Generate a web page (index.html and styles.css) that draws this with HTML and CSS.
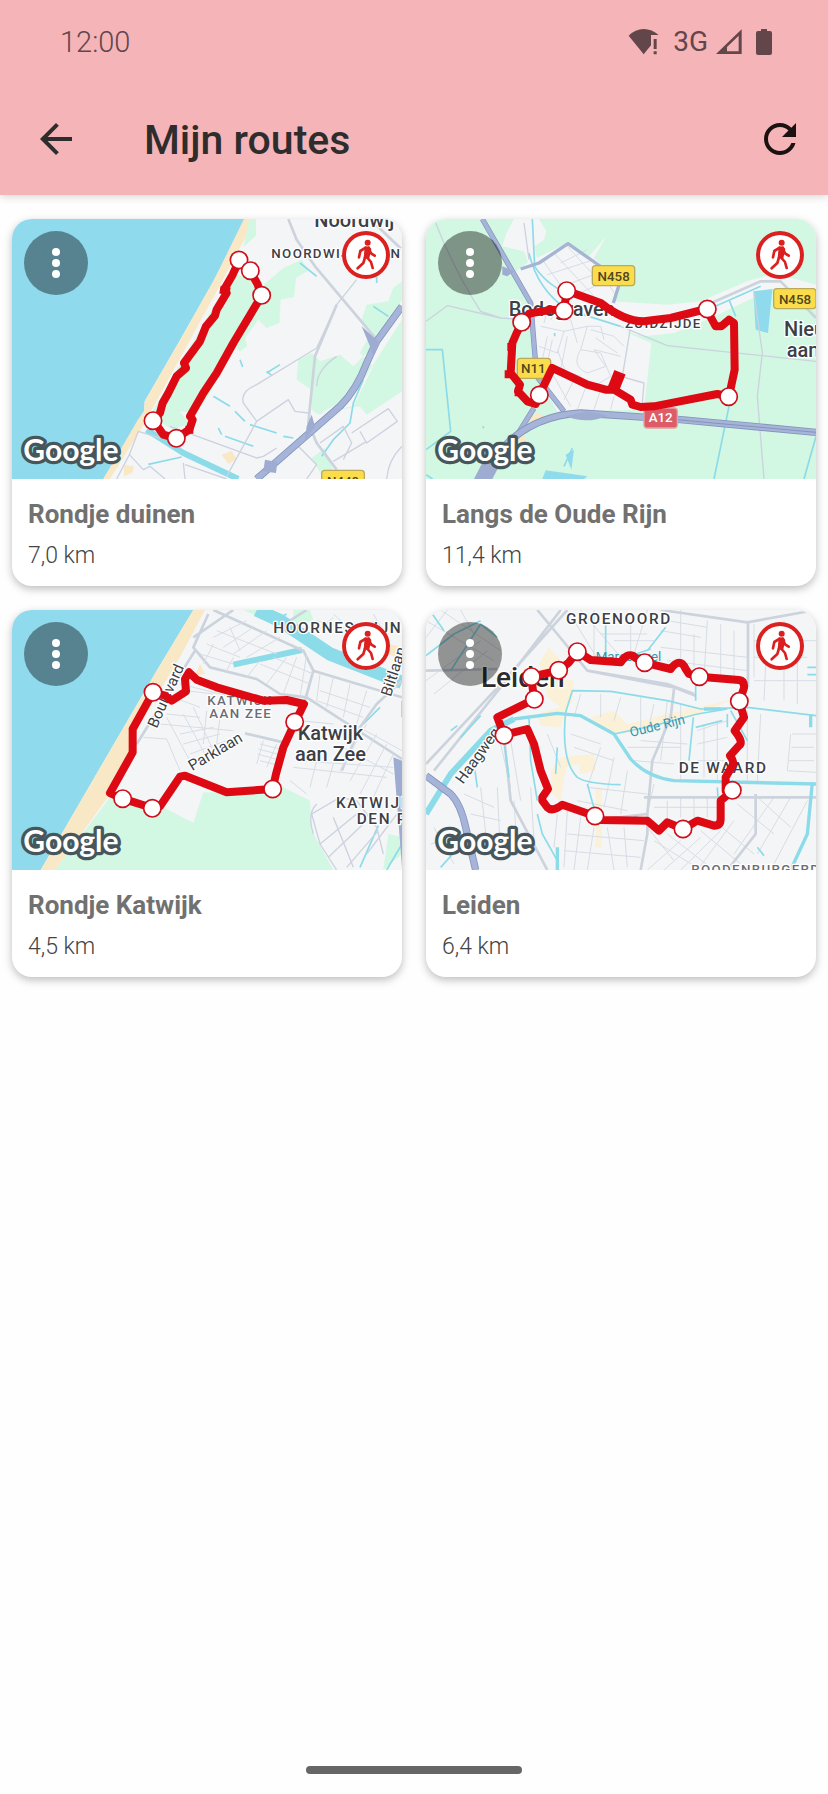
FILE: index.html
```html
<!DOCTYPE html>
<html lang="nl">
<head>
  <title>Mijn routes</title>
  <meta charset="UTF-8">
  <meta name="viewport" content="width=device-width, initial-scale=1.0">
  <link rel="stylesheet" href="styles.css">
</head>
<body>
  <!-- Shared icons -->
  <svg class="sprite" width="0" height="0" aria-hidden="true">
    <symbol id="icon-walk" viewBox="0 0 144 144">
      <circle cx="77" cy="35" r="9"/>
      <path d="M67 47 L82 46 L88 54 L82 82 L65 82 L67 58Z"/>
      <path class="limb" d="M71 50 L55 60 L51 79 M80 51 L87 67 L98 74 M70 76 L64 96 L47 112 M74 78 L87 93 L92 111"/>
    </symbol>
    <symbol id="icon-more" viewBox="0 0 64 64">
      <circle cx="32" cy="21" r="4"/>
      <circle cx="32" cy="32" r="4"/>
      <circle cx="32" cy="43" r="4"/>
    </symbol>
  </svg>

  <header class="top">
    <div class="status-bar">
      <span class="clock">12:00</span>
      <div class="status-icons">
        <svg width="31" height="27" viewBox="640 84 93 81" aria-hidden="true">
          <path d="M642 107 Q662 87 687 87 Q712 87 732 105 L709 105 L709 136 L687 163Z"/>
          <path d="M717 117h9v30h-9zM717 154h9v9h-9z"/>
        </svg>
        <span class="network">3G</span>
        <svg width="26" height="26" viewBox="907 88 78 78" aria-hidden="true">
          <path fill-rule="evenodd" d="M907 163 L984 89 L984 163Z M940 155 L975 155 L975 108 L940 142Z"/>
        </svg>
        <svg class="battery" width="16" height="26" viewBox="0 0 16 26" aria-hidden="true">
          <path d="M5 0h6v2h3a2 2 0 0 1 2 2v20a2 2 0 0 1-2 2H2a2 2 0 0 1-2-2V4a2 2 0 0 1 2-2h3z"/>
        </svg>
      </div>
    </div>
    <div class="app-bar">
      <button class="icon-btn" aria-label="Terug">
        <svg viewBox="0 0 24 24"><path d="M20 11H7.83l5.59-5.59L12 4l-8 8 8 8 1.41-1.41L7.83 13H20v-2z"/></svg>
      </button>
      <h1>Mijn routes</h1>
      <button class="icon-btn refresh" aria-label="Vernieuwen">
        <svg viewBox="0 0 24 24"><path d="M17.65 6.35C16.2 4.9 14.21 4 12 4c-4.42 0-7.99 3.58-7.99 8s3.57 8 7.99 8c3.73 0 6.84-2.55 7.73-6h-2.08c-.82 2.33-3.04 4-5.65 4-3.31 0-6-2.69-6-6s2.69-6 6-6c1.66 0 3.14.69 4.22 1.78L13 11h7V4l-2.35 2.35z"/></svg>
      </button>
    </div>
  </header>

  <main class="routes">
    <article class="card">
      <div class="map">
        <svg class="map-image" viewBox="36 28 1170 780" preserveAspectRatio="xMidYMid slice">
          <rect class="land" x="36" y="28" width="1170" height="780"/>
          <path class="sea" d="M36 28H738L640 215 535 400 434 575 432 605 310 808H36Z"/>
          <path class="sand" d="M732 28H766L650 245 450 610 425 655 330 808H310L415 628 432 605 434 575 535 400 640 215Z"/>
          <path class="park" d="M748 28h20v50l-38 34zM700 190L745 205 780 235 850 175 905 150 925 182 888 205 882 262 842 270 838 340 800 355 775 330 735 385 742 410 720 425 700 410 625 560 590 610 538 605 570 640 520 660 450 620 560 430Z"/>
          <path class="park" d="M1206 215L1180 235 1165 275 1100 285 1085 330 1110 375 1080 430 1120 470 1060 590 1000 600 955 615 935 600 935 540 890 510 895 450 935 430 960 455 1020 435 1060 470 1110 420 1206 270ZM1206 330L1110 480 1060 560 960 610 1080 590 1100 615 1206 545Z"/>
          <path class="park" d="M935 745l40-30 25 70-30 20z"/>
          <path class="sand" d="M665 735l30-12 15 25-25 15zM372 765l30 5-5 20-25 10z"/>
          <path class="water wide" d="M440 660L550 730 715 808"/>
          <path class="water" d="M445 764L545 742M640 560L690 590M705 605L735 635M750 645L830 670M850 680L880 685M655 655L665 675M675 680L760 710M800 490l40-25M720 450l8 22M965 740L1000 690 1050 640 1060 580 1090 510M800 485l15 12M900 160L950 200M1120 290L1165 320M1130 160v60"/>
          <path class="street" d="M415 665L480 685M415 665L388 735 430 780 450 770 495 808M388 735L350 808M550 760L555 808M555 765L680 808M510 650L770 745 790 740 830 715M680 800L770 635 730 580 Q720 545 770 525L950 415 1010 285 1070 210M770 635L865 570 885 605 925 610M885 700L950 765 920 808M960 700L1030 650 1055 700 1030 750M1055 670L1165 597 1192 635 1100 700 1080 665M1000 755L1100 695M1160 808Q1165 750 1206 710M1010 440Q950 480 950 530"/>
          <path class="road" d="M865 28L890 90 945 170 1130 390M1010 285L945 440 925 640 950 700 1010 780M1110 28L1206 120"/>
          <path class="motorway-edge" d="M770 808L1020 590Q1070 540 1100 460L1130 395 1206 290"/>
          <path class="motorway" d="M770 808L1020 590Q1070 540 1100 460L1130 395 1206 290"/>
          <path class="junction" d="M1085 350L1140 400 1120 440 1108 405ZM935 615L945 650 915 690 920 650ZM795 750L832 757 828 790 790 785Z"/>
          <g class="shield"><rect x="965" y="782" width="128" height="60" rx="10"/><text x="1029" y="829">N449</text></g>
          <text class="town" x="943" y="52">Noordwij</text>
          <text class="district small" x="814" y="144">NOORDWIJK-BINNEN</text>
          <path class="route" d="M716 155L698 195 672 240 680 250 650 300 645 318 618 350 600 395 552 460 558 475 530 500 505 550 488 580 480 610 460 633 490 675 528 686 568 660 578 630 570 620 610 550 650 490 700 400 785 258 772 222 750 183Z"/>
          <path class="route-spur" d="M660 240l30 5M568 648v24"/>
          <g class="stops">
            <circle cx="717" cy="151" r="26"/><circle cx="751" cy="183" r="26"/><circle cx="785" cy="257" r="26"/>
            <circle cx="459" cy="633" r="26"/><circle cx="529" cy="686" r="26"/>
          </g>
          <text class="google" x="70" y="754">Google</text>
        </svg>
        <button class="menu-btn" aria-label="Meer opties"><svg><use href="#icon-more"/></svg></button>
        <span class="badge" role="img" aria-label="Wandelroute"><svg><use href="#icon-walk"/></svg></span>
      </div>
      <div class="card-body">
        <h2>Rondje duinen</h2>
        <p>7,0 km</p>
      </div>
    </article>

    <article class="card">
      <div class="map">
        <svg class="map-image" viewBox="36 28 1170 780" preserveAspectRatio="xMidYMid slice">
          <rect class="green" x="36" y="28" width="1170" height="780"/>
          <path class="land" d="M300 28H375L398 65 390 90 362 110 368 145 460 100 525 140 578 78 540 145 620 215 600 275 760 285 860 275 1000 215 1080 190 1206 225 1206 300 1080 235 880 330 780 370 690 380 630 365 712 400 690 600 430 605 360 480 350 290 300 190 342 158 330 125 265 110 275 75Z"/>
          <path class="sand" d="M352 610L415 620 340 665ZM300 690l30-20 5 30z"/>
          <path class="lake" d="M1018 245L1075 238 1062 370 1025 360ZM395 782L520 800 510 808H385ZM455 735l25-15-8 60zM428 725l6 18z"/>
          <path class="water" d="M355 28L362 170Q400 230 480 260M345 130Q370 240 460 300L620 350M900 808L945 590M1170 808L1206 680M36 420H85L110 665 36 720M870 305L1040 230M945 270L965 320M475 715L450 770M422 370v10M36 795l20 13M208 650v6"/>
          <path class="street" d="M65 40Q120 180 200 305L260 325 330 330M36 335L100 288 260 325M620 350L760 408 1206 455M1020 250L1045 430 1030 560 1050 808M650 350L625 500M620 500L690 520 685 580M330 40L345 150"/>
          <path class="street thin" d="M385 150L470 270M420 130L540 260M460 110L570 230M440 160L520 120M400 195L540 150M430 235L580 180M470 262L610 200M540 150L610 265M380 350L450 365 430 430 375 410M450 365L520 350 500 420 560 430M400 380L385 450M415 390L400 460M430 420L460 500M460 380L440 480 500 500M500 420Q470 470 520 490L575 470 540 420 620 440M530 360L600 380 630 410M545 385L610 430M560 430L590 500 540 530M480 510L450 570M420 500L470 590M520 520L490 600M560 540L540 600M600 560L590 600M520 350L560 350 570 390M470 330L490 400M390 340L400 300M410 330L430 300"/>
          <path class="major" d="M320 178L375 160 462 102 545 160 620 210 598 280"/>
          <path class="major pale" d="M870 290L1040 215 1100 215 1206 325"/>
          <path class="motorway-edge narrow" d="M205 28L350 280 368 500 450 605M360 595L310 675"/>
          <path class="motorway narrow" d="M205 28L350 280 368 500 450 605M360 595L310 675"/>
          <path class="motorway-edge" d="M200 808Q300 620 500 610 L800 630 1206 668"/>
          <path class="motorway" d="M200 808Q300 620 500 610 L800 630 1206 668"/>
          <path class="junction" d="M455 620Q520 645 580 618L520 605ZM265 170L300 185 280 200 265 195ZM180 808L215 740 265 750 235 808Z"/>
          <path class="lane" d="M700 622L1206 668"/>
          <g class="shield"><rect x="535" y="168" width="127" height="60" rx="10"/><text x="599" y="213">N458</text></g>
          <g class="shield"><rect x="1079" y="237" width="127" height="60" rx="10"/><text x="1143" y="282">N458</text></g>
          <g class="shield"><rect x="310" y="446" width="100" height="60" rx="10"/><text x="358" y="491">N11</text></g>
          <g class="shield motorway-shield"><rect x="690" y="595" width="100" height="60" rx="10"/><text x="740" y="638">A12</text></g>
          <text class="town" x="284" y="318">Bodegraven</text>
          <text class="district small" x="633" y="355">ZUIDZIJDE</text>
          <text class="town" x="1110" y="380">Nieuwerbrug</text>
          <text class="town" x="1118" y="443">aan den Rijn</text>
          <path class="route" d="M458 243L560 280Q630 335 690 335L770 325 877 298 905 350 922 350 945 330 960 340 962 480 945 560 910 553 720 590 680 592 655 585 650 570 600 540 575 540 520 525 415 475 376 556 365 583 340 575 312 545 318 525 290 490 295 400 308 370 323 340 345 312 415 300 450 303Z"/>
          <path class="route-spur wide" d="M597 540L618 488"/>
          <path class="route-spur" d="M272 494h20M302 548h20M280 412h20"/>
          <g class="stops">
            <circle cx="458" cy="243" r="26"/><circle cx="450" cy="303" r="26"/><circle cx="323" cy="338" r="26"/>
            <circle cx="376" cy="556" r="26"/><circle cx="880" cy="298" r="26"/><circle cx="944" cy="561" r="26"/>
          </g>
          <text class="google" x="70" y="754">Google</text>
        </svg>
        <button class="menu-btn" aria-label="Meer opties"><svg><use href="#icon-more"/></svg></button>
        <span class="badge" role="img" aria-label="Wandelroute"><svg><use href="#icon-walk"/></svg></span>
      </div>
      <div class="card-body">
        <h2>Langs de Oude Rijn</h2>
        <p>11,4 km</p>
      </div>
    </article>

    <article class="card">
      <div class="map">
        <svg class="map-image" viewBox="36 28 1170 780" preserveAspectRatio="xMidYMid slice">
          <rect class="land" x="36" y="28" width="1170" height="780"/>
          <path class="sea" d="M36 28H580L470 210 330 450 122 808H36Z"/>
          <path class="sand" d="M580 28H615L545 160 420 370 345 560 165 808H122L330 450 470 210Z"/>
          <path class="park" d="M165 808L345 570 500 625 580 667 610 575 700 575 830 550 930 600 935 690 1000 808ZM730 28H770L850 65 800 60ZM880 28h50l10 30-60 20zM1165 700L1206 710V760L1150 808Z"/>
          <path class="sand" d="M1130 120l76 20v35l-60-20zM600 190l15 30-30 5z"/>
          <path class="water canal" d="M770 28L840 60 990 160 1206 245"/>
          <path class="water wide" d="M700 192L905 148"/>
          <path class="water" d="M1135 675L1080 800M1206 730L1160 808M1090 370L1140 320M1206 300V350M820 60l40-20"/>
          <path class="major pale" d="M625 40L580 140 630 200 770 235 840 280 920 290 1206 475M410 430L585 150M735 398L850 425M1206 240L1130 310 1080 380 1025 510M580 110L700 28M640 28L910 150 940 210 1206 290M940 210L915 300M870 60L920 28"/>
          <path class="street thin" d="M600 160L700 190M620 130L720 170M650 90L830 160M640 110L740 60M670 140L760 80M700 160L800 90M740 170L840 110M690 80L720 150M610 190L640 130M680 210L700 170M740 230L780 180M800 250L860 170M850 280L890 170M900 290L920 160M780 190L930 250M820 170L940 220M960 220L950 300M1000 230L980 320M1050 250L1030 350M1100 270L1070 370M960 270L1110 320M950 300L1090 350M560 270L640 280M520 290L600 320M540 250L700 290M500 340L600 350M480 370L700 390M430 410L500 415 540 510M500 350L580 500M550 340L620 470M580 320L640 450M620 330L610 430M660 350L650 430M540 400L640 380M550 430L660 400M570 460L680 420M780 430L860 450M775 445L850 465M772 460L845 480M780 480L840 495M790 420L770 490M830 430L800 500M900 360L1000 370M880 500L1160 530M890 480L1180 500M1100 370L1020 510M1130 400L1050 540M1160 430L1080 580M1180 460L1120 590M950 480L930 560M1000 490L980 560M870 540L920 580M1060 370L1206 450M1030 440L1180 520M1010 100L1130 60M950 60L1060 90M1000 40L1090 120M1120 40L1160 110M940 100L1000 50"/>
          <path class="street" d="M935 640L1020 590 1070 600 1130 680 1150 760M935 640L960 730 1010 808M960 730L1070 640M985 770L1100 660M1040 800L1135 690M1000 650L1060 800M950 610Q920 640 940 700M1206 620L1100 760"/>
          <path class="junction" d="M1180 470L1206 480V800L1192 620Z"/>
          <text class="district" x="820" y="96">HOORNES-RIJN</text>
          <text class="street-name" transform="translate(470 385) rotate(-66)">Boulevard</text>
          <text class="street-name" transform="translate(577 512) rotate(-31)">Parklaan</text>
          <text class="street-name" transform="translate(1172 290) rotate(-72)">Biltlaan</text>
          <text class="district small quiet" x="622" y="312">KATWIJK</text>
          <text class="district small quiet" x="628" y="352">AAN ZEE</text>
          <text class="town" x="893" y="418">Katwijk</text>
          <text class="town" x="885" y="481">aan Zee</text>
          <text class="district" x="1008" y="621">KATWIJK</text>
          <text class="district" x="1070" y="669">DEN RIJN</text>
          <path class="route" d="M459 275L398 385V455L330 577 368 594 457 622 480 617 540 528 555 525 680 575 818 565 828 520 850 440 885 365 912 310 860 298 790 300 650 260 590 237 567 215 555 235 558 272 515 300 495 285Z"/>
          <g class="stops">
            <circle cx="459" cy="275" r="26"/><circle cx="884" cy="364" r="26"/><circle cx="818" cy="565" r="26"/>
            <circle cx="457" cy="623" r="26"/><circle cx="368" cy="594" r="26"/>
          </g>
          <text class="google" x="70" y="754">Google</text>
        </svg>
        <button class="menu-btn" aria-label="Meer opties"><svg><use href="#icon-more"/></svg></button>
        <span class="badge" role="img" aria-label="Wandelroute"><svg><use href="#icon-walk"/></svg></span>
      </div>
      <div class="card-body">
        <h2>Rondje Katwijk</h2>
        <p>4,5 km</p>
      </div>
    </article>

    <article class="card">
      <div class="map">
        <svg class="map-image" viewBox="36 28 1170 780" preserveAspectRatio="xMidYMid slice">
          <rect class="land" x="36" y="28" width="1170" height="780"/>
          <path class="city" d="M375 190L405 140 440 180 420 230 480 240 475 300 455 330 440 380 380 375 370 340 440 320 400 290ZM530 350L600 330 640 370 760 340 850 320 950 298 880 330 620 400 560 385ZM410 510L440 470 540 460 545 510 500 520 495 490 455 500 440 600 415 580ZM545 560h18v180h-18z"/>
          <path class="street thin" d="M36 60L240 180M80 28L260 150M140 28L180 100M36 240L200 120M60 280L220 150M100 28L36 110M480 60L560 190M500 28L620 170M540 28V180M560 100H700M600 120H720M650 60V180M700 28L660 160M740 90L860 110M760 60L880 80M800 28V190M840 100V200M880 60L870 230M920 70V230M960 90V230M740 140L1000 170M760 180L1000 210M1020 70V230M1060 90L1050 300M1110 60V300M1150 110V310M1020 120H1206M1020 170H1180M1020 240H1206M500 280L480 350M560 280V350M620 290L600 360M680 290V380M720 310L700 400M760 300L740 480M800 310V540M680 420L820 430M640 440H800M660 480L780 490M850 390L940 360M850 430L940 410M870 370V530M910 360V540M850 480H930M1000 330V540M1040 340L1030 540M1130 400L1120 510 1206 515M1135 400H1206M1132 440H1200M1125 480H1200M720 550L700 640M760 600V660M800 590V650M840 590V650M880 590V650M720 620H920M520 560L700 580M490 600L640 630M560 440L520 560M600 470L570 620M640 510L620 640M470 400L560 430M480 440L600 480M400 400L440 500M260 430L290 560M290 420L320 600M150 580L240 620M170 640L260 660M190 700L280 720M200 560L220 740M250 560L260 780M300 600L310 760M350 560L360 720M430 640L420 740M460 630L450 800M500 650L480 808M540 680L520 808M580 680L600 808M630 680L640 800M460 700L690 720M450 750L680 770M720 720L860 808M760 700L900 808M800 720L700 808M860 710L750 808M920 690L800 808M960 660L850 808M860 690L980 790M900 660L1020 760M970 610L1080 700M1020 580L1130 680M1080 590L960 760M1130 590L1030 760M1180 600L1080 790M700 680L780 780M60 680L120 790M50 730L140 700"/>
          <path class="road" d="M36 490L270 240 460 28M60 510L300 210 440 28M370 28L430 100 520 210 780 260 845 285M36 210L250 205M520 210L760 250 840 280M780 265L770 350 715 480 700 640 570 655M740 28L1000 65 1206 28M1002 65V260M690 590L940 590 1206 590M1025 580V700L940 808M270 410L290 600 400 808M700 640V700L680 808"/>
          <path class="water wide" d="M36 640L110 520 230 390 300 355"/>
          <path class="water mid" d="M300 355L430 338 500 345 600 400 650 475Q700 530 780 540L1206 550"/>
          <path class="water" d="M455 335L475 270 590 272 760 300 860 325 1000 320 1206 345M600 400L720 375 850 340 940 325M455 335Q440 480 490 530 520 550 620 552M575 60V170M755 80L700 150M345 350L350 480 370 600M270 420L285 530M430 440L425 520M845 240V300M838 350L825 480M845 380L925 360M36 165L120 100 200 60M110 210L200 70 250 110M55 40L90 90M140 410L200 345M110 390L130 375M940 340V380M910 560L915 640M950 330L1000 420M650 165l60-20M370 640L385 700 430 780M180 490L190 560M80 800L170 700M520 550L545 640M1030 740l20 25M1180 200h26M1180 222h26M640 665L670 645"/>
          <path class="water mid" d="M430 740V808M1190 340V380M1195 545L1180 700 1130 808M870 325h50"/>
          <path class="motorway-edge" d="M36 525L110 580Q140 610 155 680L185 808"/>
          <path class="motorway" d="M36 525L110 580Q140 610 155 680L185 808"/>
          <text class="district" x="456" y="71">GROENOORD</text>
          <text class="district" x="794" y="517">DE WAARD</text>
          <text class="district small quiet" x="832" y="819">ROODENBURGERDISTRICT</text>
          <text class="water-name" x="545" y="182">Maresingel</text>
          <text class="water-name" transform="translate(651 409) rotate(-14)">Oude Rijn</text>
          <text class="street-name" transform="translate(147 552) rotate(-54)">Haagweg</text>
          <text class="city-name" x="201" y="259">Leiden</text>
          <path class="route" d="M352 228L434 210 465 185 490 153 530 178 620 185Q645 150 665 172L692 186 770 205Q798 168 815 205L825 220 856 228 975 238Q992 240 990 262L976 302 990 350 962 390Q990 425 975 435L948 465Q962 485 955 495L935 530 935 570 955 570 920 600V655Q920 675 900 675L850 660 807 685 760 665 735 690 700 660 560 658 540 645 445 612Q415 635 400 620L385 600V590L402 565 380 510 360 430 340 385 270 403 250 350 360 296Z"/>
          <g class="stops">
            <circle cx="352" cy="228" r="26"/><circle cx="434" cy="209" r="26"/><circle cx="490" cy="153" r="26"/>
            <circle cx="692" cy="186" r="26"/><circle cx="856" cy="228" r="26"/><circle cx="976" cy="302" r="26"/>
            <circle cx="955" cy="569" r="26"/><circle cx="807" cy="685" r="26"/><circle cx="543" cy="646" r="26"/>
            <circle cx="270" cy="404" r="26"/><circle cx="361" cy="296" r="26"/>
          </g>
          <text class="google" x="70" y="754">Google</text>
        </svg>
        <button class="menu-btn" aria-label="Meer opties"><svg><use href="#icon-more"/></svg></button>
        <span class="badge" role="img" aria-label="Wandelroute"><svg><use href="#icon-walk"/></svg></span>
      </div>
      <div class="card-body">
        <h2>Leiden</h2>
        <p>6,4 km</p>
      </div>
    </article>
  </main>

  <footer class="home-bar"><span class="handle"></span></footer>
</body>
</html>
```
FILE: styles.css
```css
* {
  box-sizing: border-box;
}
body {
  font-family: Roboto, sans-serif;
  background: #fefefe;
  margin: 0;
  min-height: 100vh;
  display: flex;
  flex-direction: column;
}
h1, h2, p {
  margin: 0;
}
button {
  border: none;
  padding: 0;
  cursor: pointer;
}
svg {
  display: block;
}
.sprite {
  position: absolute;
}

/* Header */
.top {
  background: #f5b4b8;
  box-shadow: 0 2px 8px rgba(0,0,0,0.15);
}
.status-bar {
  display: flex;
  justify-content: space-between;
  align-items: center;
  height: 83px;
  padding: 0 56px 0 60px;
  color: #624649;
  font-size: 28px;
}
.clock {
  font-size: 29px;
  font-weight: 300;
}
.status-icons {
  display: flex;
  align-items: center;
  gap: 14px;
  fill: #624649;
}
.network {
  font-weight: 400;
  margin-right: -6px;
}
.app-bar {
  display: flex;
  align-items: center;
  height: 112px;
  padding: 0 24px 0 32px;
}
.app-bar h1 {
  flex: 1;
  margin-left: 64px;
  padding-top: 2px;
  font-size: 41px;
  font-weight: 500;
  color: #2e2d2d;
}
.icon-btn {
  width: 48px;
  height: 48px;
  background: none;
  fill: #2e2d2d;
}
.refresh {
  fill: #1c1111;
}

/* Route cards */
.routes {
  display: grid;
  grid-template-columns: 1fr 1fr;
  gap: 24px;
  padding: 24px 12px;
}
.card {
  background: #fff;
  border-radius: 20px;
  overflow: hidden;
  box-shadow: 0 3px 8px rgba(0,0,0,0.26);
}
.map {
  position: relative;
}
.map-image {
  width: 100%;
  aspect-ratio: 3 / 2;
}
.menu-btn {
  position: absolute;
  top: 12px;
  left: 12px;
  width: 64px;
  height: 64px;
  border-radius: 50%;
  background: rgba(0,0,0,0.4);
  fill: #fff;
}
.menu-btn svg, .badge svg {
  width: 100%;
  height: 100%;
}
.badge {
  position: absolute;
  top: 12px;
  right: 12px;
  width: 48px;
  height: 48px;
  border-radius: 50%;
  background: #fff;
  box-shadow: inset 0 0 0 4px #db2020;
  fill: #db2020;
}
.limb {
  fill: none;
  stroke: #db2020;
  stroke-width: 8;
  stroke-linecap: round;
  stroke-linejoin: round;
}
.card-body {
  padding: 19px 16px 16px;
}
.card-body h2 {
  font-size: 26px;
  line-height: 32px;
  font-weight: 700;
  color: #717171;
}
.card-body p {
  margin-top: 11px;
  font-size: 23px;
  line-height: 29px;
  font-weight: 300;
  color: #444;
}

/* Map drawing */
.land { fill: #f4f5f6; }
.green, .park { fill: #d2f7e2; }
.sea, .lake { fill: #90daee; }
.sand { fill: #f9e8c6; }
.city { fill: #fbf0d8; }
.junction { fill: #9dacd0; }
.water, .street, .road, .major, .motorway, .motorway-edge, .lane {
  fill: none;
  stroke-linejoin: round;
}
.water { stroke: #8cdbe9; stroke-width: 5; }
.water.mid { stroke-width: 10; }
.water.wide { stroke-width: 18; }
.water.canal { stroke-width: 40; }
.street { stroke: #ccd2df; stroke-width: 4; }
.street.thin { stroke: #d7dde5; stroke-width: 3; }
.road { stroke: #ccd3dc; stroke-width: 8; }
.major { stroke: #a6b4d3; stroke-width: 10; }
.major.pale { stroke: #cbd3dc; stroke-width: 8; }
.motorway-edge { stroke: #8494ba; stroke-width: 22; }
.motorway { stroke: #a5b4d8; stroke-width: 17; }
.motorway-edge.narrow { stroke-width: 16; }
.motorway.narrow { stroke-width: 12; }
.lane { stroke: #8494ba; stroke-width: 3; }
.route, .route-spur {
  fill: none;
  stroke: #dd0913;
  stroke-width: 24;
  stroke-linejoin: round;
}
.route-spur.wide { stroke-width: 36; }
.stops circle {
  fill: #fff;
  stroke: #d00d1a;
  stroke-width: 5;
}
.map-image text {
  paint-order: stroke;
  stroke: #fff;
  stroke-width: 8px;
  stroke-linejoin: round;
  fill: #3c4046;
}
.map-image .town {
  font-size: 60px;
  font-weight: 500;
}
.map-image .city-name {
  font-size: 84px;
  font-weight: 500;
  fill: #2c2c2e;
}
.map-image .district {
  font-size: 46px;
  font-weight: 500;
  letter-spacing: 5px;
}
.map-image .small {
  font-size: 40px;
  letter-spacing: 4px;
}
.map-image .quiet {
  fill: #6a6d73;
}
.map-image .street-name {
  font-size: 46px;
}
.map-image .water-name {
  font-size: 40px;
  fill: #3796aa;
  stroke: none;
}
.shield rect {
  fill: #fbdc4b;
  stroke: #bba95c;
  stroke-width: 4;
}
.map-image .shield text {
  font-size: 40px;
  font-weight: 500;
  text-anchor: middle;
  stroke: none;
  fill: #51461f;
}
.motorway-shield rect {
  fill: #dc5d68;
  stroke: #e8a0a4;
}
.map-image .motorway-shield text {
  fill: #fff;
}
.map-image .google {
  font-family: Lato, sans-serif;
  font-size: 90px;
  font-weight: 700;
  fill: #fff;
  stroke: #46565a;
  stroke-width: 20px;
}

/* Gesture bar */
.home-bar {
  margin-top: auto;
  padding: 20px 0;
}
.handle {
  display: block;
  width: 26%;
  height: 8px;
  margin: 0 auto;
  border-radius: 4px;
  background: #666;
}
```
